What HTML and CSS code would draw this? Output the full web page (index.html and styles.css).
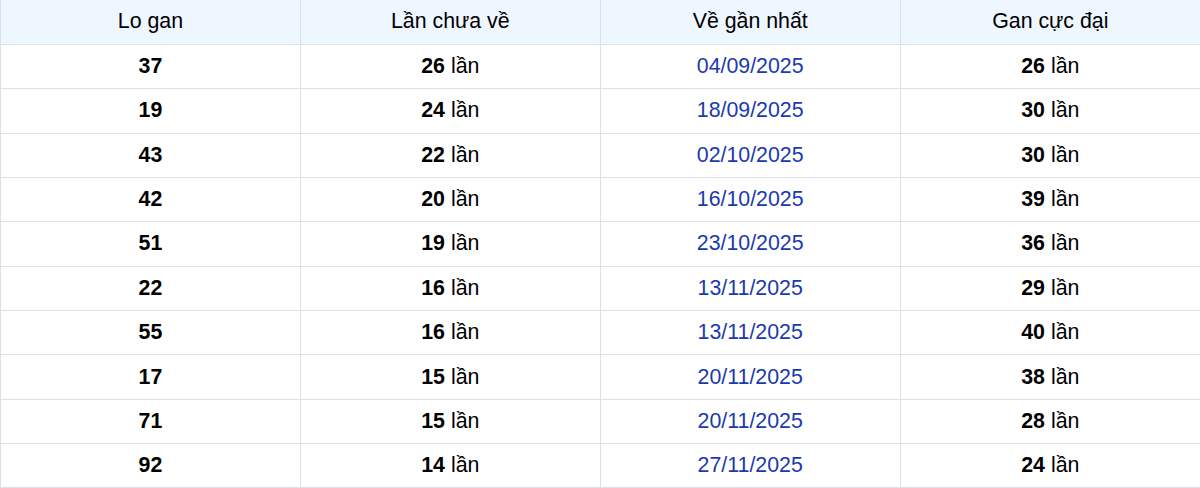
FILE: index.html
```html
<!DOCTYPE html>
<html lang="vi">
<head>
<meta charset="utf-8">
<title>Lo gan</title>
<link rel="stylesheet" href="styles.css">
</head>
<body>
<table class="gan-table">
  <thead>
    <tr>
      <th>Lo gan</th>
      <th>Lần chưa về</th>
      <th>Về gần nhất</th>
      <th>Gan cực đại</th>
    </tr>
  </thead>
  <tbody>
    <tr><td><b>37</b></td><td><b>26</b> lần</td><td class="date">04/09/2025</td><td><b>26</b> lần</td></tr>
    <tr><td><b>19</b></td><td><b>24</b> lần</td><td class="date">18/09/2025</td><td><b>30</b> lần</td></tr>
    <tr><td><b>43</b></td><td><b>22</b> lần</td><td class="date">02/10/2025</td><td><b>30</b> lần</td></tr>
    <tr><td><b>42</b></td><td><b>20</b> lần</td><td class="date">16/10/2025</td><td><b>39</b> lần</td></tr>
    <tr><td><b>51</b></td><td><b>19</b> lần</td><td class="date">23/10/2025</td><td><b>36</b> lần</td></tr>
    <tr><td><b>22</b></td><td><b>16</b> lần</td><td class="date">13/11/2025</td><td><b>29</b> lần</td></tr>
    <tr><td><b>55</b></td><td><b>16</b> lần</td><td class="date">13/11/2025</td><td><b>40</b> lần</td></tr>
    <tr><td><b>17</b></td><td><b>15</b> lần</td><td class="date">20/11/2025</td><td><b>38</b> lần</td></tr>
    <tr><td><b>71</b></td><td><b>15</b> lần</td><td class="date">20/11/2025</td><td><b>28</b> lần</td></tr>
    <tr><td><b>92</b></td><td><b>14</b> lần</td><td class="date">27/11/2025</td><td><b>24</b> lần</td></tr>
  </tbody>
</table>
</body>
</html>
```

FILE: styles.css
```css
html, body {
  margin: 0;
  padding: 0;
  background: #ffffff;
}

body {
  font-family: "Liberation Sans", Arial, sans-serif;
  font-size: 21.33px;
  color: #000000;
}

.gan-table {
  width: 1200px;
  border-collapse: collapse;
  table-layout: fixed;
}

.gan-table th,
.gan-table td {
  border: 1px solid #dcdfe4;
  height: 44.36px;
  padding: 0;
  text-align: center;
  vertical-align: middle;
  box-sizing: border-box;
}

.gan-table th {
  background: #eef6ff;
  font-weight: normal;
  color: #000000;
  border-top: 0;
}

.gan-table tr > :last-child {
  border-right: 0;
}

.gan-table b {
  font-weight: bold;
}

.gan-table .date {
  color: #1a3aae;
}
```
